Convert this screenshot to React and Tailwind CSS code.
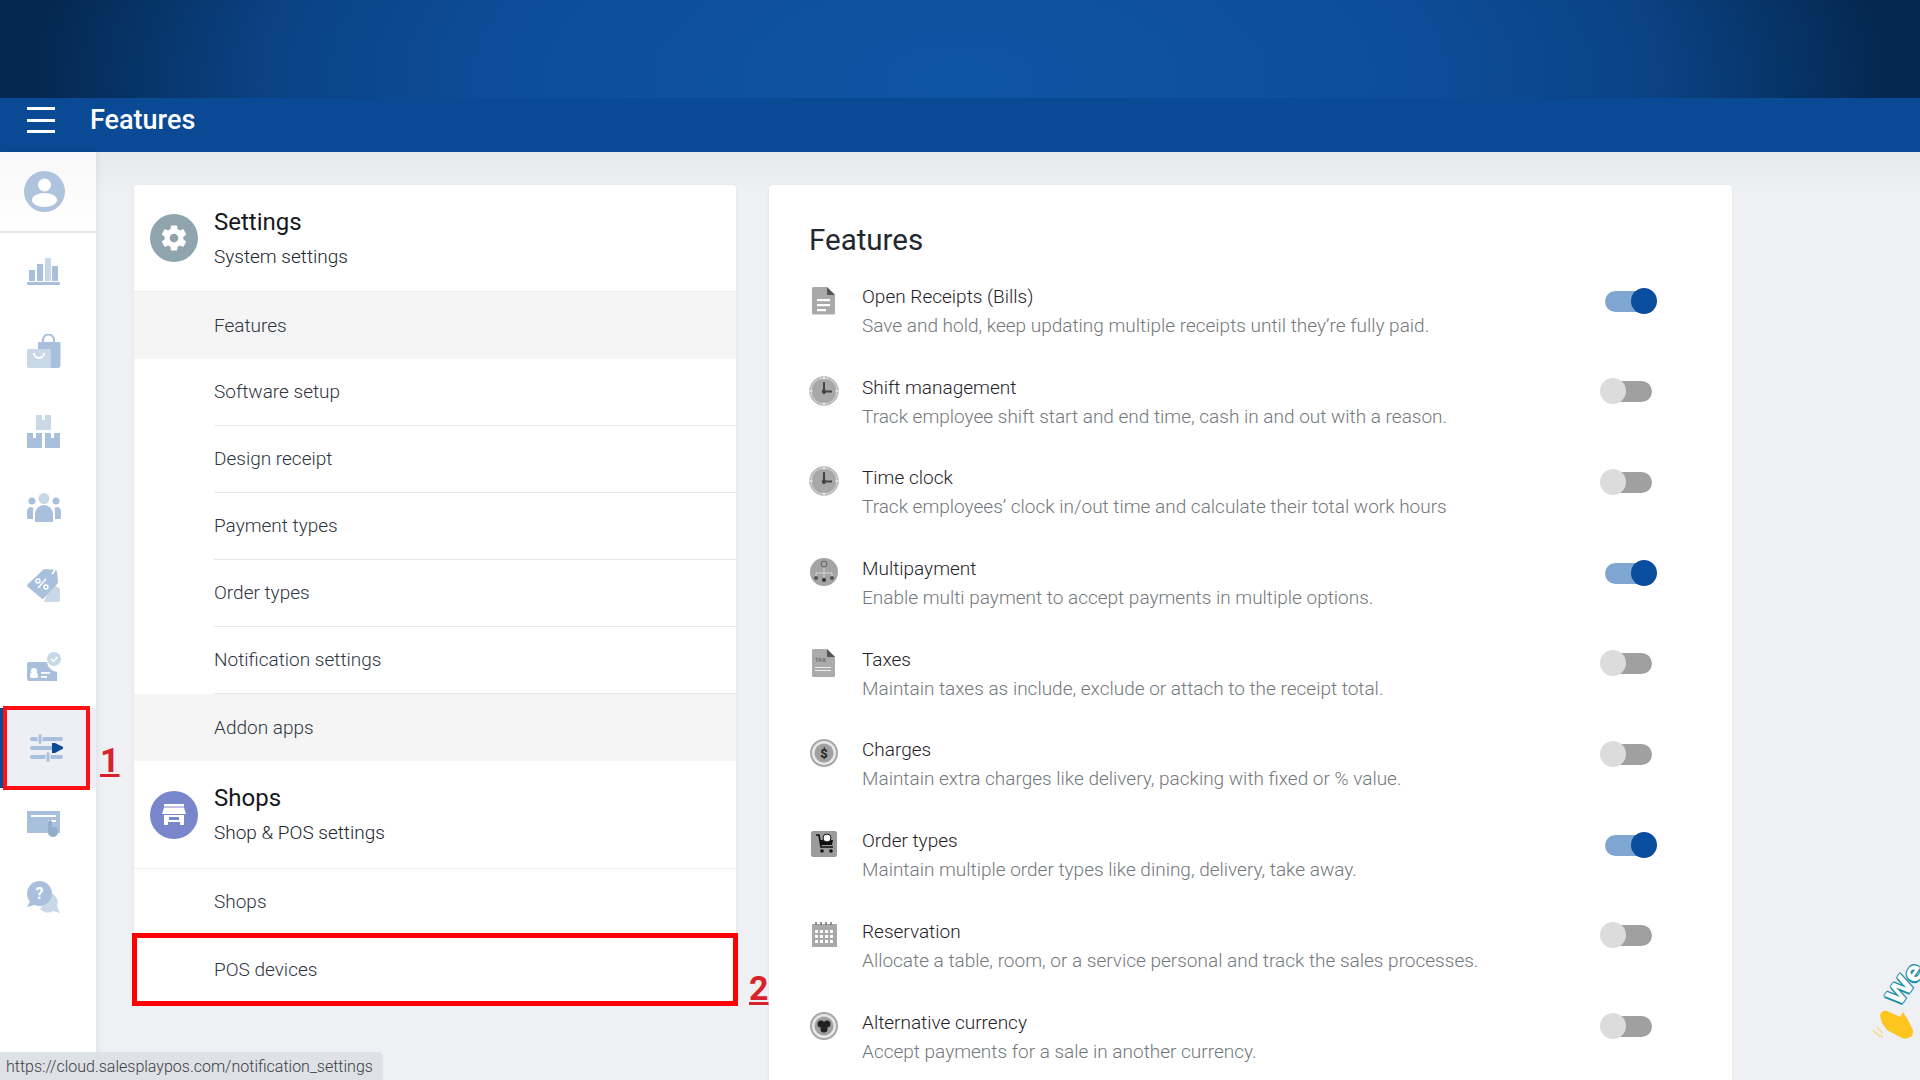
import React from "react";

const F = { fontFamily: 'Roboto, "Liberation Sans", sans-serif' };
const B = "#a9c0dc";
const L = "#c8d8e6";

const sideIcons = {
  chart: (
    <svg width="34" height="28" viewBox="0 0 34 28">
      <rect x="2" y="12" width="6" height="11" fill={B} />
      <rect x="10" y="6" width="6" height="17" fill={B} />
      <rect x="18" y="0" width="6" height="23" fill={L} />
      <rect x="25" y="8" width="6" height="15" fill={B} />
      <rect x="0" y="24" width="33" height="3" rx="1" fill={B} />
    </svg>
  ),
  bag: (
    <svg width="34" height="34" viewBox="0 0 34 34">
      <path d="M16 8V6a5 5 0 0 1 11 0v2" fill="none" stroke={B} strokeWidth="2" />
      <path d="M11 8h21a1.500 1.500 0 0 1 1.500 1.500V31a3 3 0 0 1-3 3h-8V15H11z" fill={B} />
      <rect x="0" y="15" width="24" height="19" rx="2" fill={L} />
      <path d="M7 19a5 5 0 0 0 10 0" fill="none" stroke="#fff" strokeWidth="1.800" />
    </svg>
  ),
  boxes: (
    <svg width="34" height="33" viewBox="0 0 34 33">
      <path d="M9 0h6v5h3V0h6v15H9z" fill={L} />
      <path d="M0 18h6v5h3v-5h6v15H0zM18 18h6v5h3v-5h6v15H18z" fill={B} />
    </svg>
  ),
  people: (
    <svg width="34" height="29" viewBox="0 0 34 29">
      <circle cx="17" cy="5.500" r="5.500" fill={L} />
      <circle cx="5" cy="8" r="3.500" fill={B} />
      <circle cx="29" cy="8" r="3.500" fill={B} />
      <path d="M8 29v-8a9 9 0 0 1 18 0v8z" fill={B} />
      <path d="M0 25v-7a4 4 0 0 1 6.500-3A12 12 0 0 0 6 19v7H1.500A1.500 1.500 0 0 1 0 25zM34 25v-7a4 4 0 0 0-6.500-3 12 12 0 0 1 .5 4v7h4.500a1.500 1.500 0 0 0 1.500-1.500z" fill={B} />
    </svg>
  ),
  tag: (
    <svg width="34" height="35" viewBox="0 0 34 35">
      <path d="M24 14l9 7v11a2 2 0 0 1-2 2H17z" fill={L} />
      <path d="M1 16L16 2a2 2 0 0 1 2-1l10 1a2 2 0 0 1 2 2l1 10a2 2 0 0 1-1 2L17 30a2 2 0 0 1-3 0L1 19a2 2 0 0 1 0-3z" fill={B} />
      <path d="M11 20l8-9" stroke="#fff" strokeWidth="1.500" />
      <circle cx="11" cy="13" r="2" fill="none" stroke="#fff" strokeWidth="1.500" />
      <circle cx="19" cy="19" r="2" fill="none" stroke="#fff" strokeWidth="1.500" />
      <path d="M25 6l3-4" stroke="#fff" strokeWidth="1.500" />
    </svg>
  ),
  idcard: (
    <svg width="34" height="30" viewBox="0 0 34 30">
      <path d="M2 9h18a11 11 0 0 0 10 10v9a2 2 0 0 1-2 0H2a2 2 0 0 1-2-2V11a2 2 0 0 1 2-2z" fill={B} transform="translate(0 1)" />
      <circle cx="7" cy="19" r="3" fill="#fff" />
      <rect x="3" y="21" width="8" height="5" rx="1.500" fill="#fff" />
      <rect x="14" y="20" width="9" height="1.800" fill="#fff" />
      <rect x="14" y="24" width="6" height="1.800" fill="#fff" />
      <circle cx="27" cy="7" r="7" fill={L} />
      <path d="M24 7l2.500 2.500L30.500 5" fill="none" stroke="#fff" strokeWidth="1.500" />
    </svg>
  ),
  sliders: (
    <svg width="34" height="28" viewBox="0 0 34 28">
      <rect x="0" y="3" width="33" height="4" rx="2" fill={B} />
      <rect x="0" y="12" width="33" height="4" rx="2" fill={B} />
      <rect x="0" y="21" width="33" height="4" rx="2" fill={B} />
      <rect x="8" y="0" width="4" height="10" rx="1.500" fill={B} stroke="#eeeef5" strokeWidth="1" />
      <rect x="16" y="18" width="4" height="10" rx="1.500" fill={B} stroke="#eeeef5" strokeWidth="1" />
      <path d="M22 9h3l8 4v1.500L25 19h-3z" fill="#0b4a96" />
    </svg>
  ),
  card: (
    <svg width="34" height="28" viewBox="0 0 34 28">
      <path d="M0 0h33v22h-5a6 6 0 0 0-8 0H0z" fill={B} />
      <rect x="4" y="4" width="25" height="2" fill="#fff" />
      <rect x="21" y="9" width="8" height="2" fill="#fff" />
      <path d="M21 11a2 2 0 0 1 4 0v5h2a5 5 0 1 1-6 5z" fill="#93aecb" />
    </svg>
  ),
  help: (
    <svg width="34" height="33" viewBox="0 0 34 33">
      <path d="M24 12a10 10 0 0 1 6 13l3 7-7-2a10 10 0 0 1-13-2z" fill={L} />
      <circle cx="12.500" cy="12.500" r="12.500" fill={B} />
      <path d="M3 20l-3 6 8-2z" fill={B} />
      <text x="12.500" y="18" textAnchor="middle" fontSize="16" fontWeight="700" fill="#fff" style={F}>?</text>
    </svg>
  ),
};

const sideItems = [
  ["chart", "h-[77px]"],
  ["bag", "h-[82px]"],
  ["boxes", "h-[78px]"],
  ["people", "h-[74px]"],
  ["tag", "h-[82px]"],
  ["idcard", "h-[82px]"],
  ["sliders", "h-[80px]"],
  ["card", "h-[74px]"],
  ["help", "h-[70px]"],
];

function Clock() {
  return (
    <svg width="30" height="30" viewBox="0 0 30 30">
      <circle cx="15" cy="15" r="14.500" fill="#a6a6a6" stroke="#c9c9c9" strokeWidth="1" />
      <circle cx="15" cy="15" r="13" fill="#a8a8a8" stroke="#e8e8e8" strokeWidth="0.800" />
      <path d="M15 6v12M15 15.500h8" fill="none" stroke="#444" strokeWidth="2" />
      <circle cx="15" cy="15.500" r="2.200" fill="#444" />
      <path d="M15 .5v3M15 26.500v3M.5 15h3M26.500 15h3" stroke="#eee" strokeWidth="1.500" />
    </svg>
  );
}

const featureIcons = {
  doc: (
    <svg width="24" height="29" viewBox="0 0 24 29">
      <path d="M1.500 1H15l8 8v18a1.500 1.500 0 0 1-1.500 1.500h-20A1.500 1.500 0 0 1 0 27V2.500A1.500 1.500 0 0 1 1.500 1z" fill="#a9a9a9" />
      <path d="M15 1l8 8h-8z" fill="#555" />
      <rect x="5" y="13" width="13" height="2.200" fill="#fff" />
      <rect x="5" y="18" width="13" height="2.200" fill="#fff" />
      <rect x="5" y="23" width="9" height="2.200" fill="#fff" />
    </svg>
  ),
  clock: <Clock />,
  multi: (
    <svg width="28" height="28" viewBox="0 0 28 28">
      <circle cx="14" cy="14" r="14" fill="#a4a4a4" />
      <circle cx="14" cy="6" r="3" fill="none" stroke="#555" strokeWidth="0.800" />
      <path d="M14 10v5M6 18v-3h16v3M14 15v4" fill="none" stroke="#ddd" strokeWidth="0.900" />
      <circle cx="6" cy="20" r="2" fill="#555" />
      <circle cx="14" cy="22" r="2" fill="#333" />
      <circle cx="22" cy="20" r="2" fill="#555" />
    </svg>
  ),
  tax: (
    <svg width="24" height="28" viewBox="0 0 24 28">
      <path d="M1.500 0H15l8 8v18.500a1.500 1.500 0 0 1-1.500 1.500h-20A1.500 1.500 0 0 1 0 26.500V1.500A1.500 1.500 0 0 1 1.500 0z" fill="#ababab" />
      <path d="M15 0l8 8h-8z" fill="#555" />
      <text x="3" y="13" fontSize="6" fill="#555" style={F}>TAX</text>
      <rect x="3" y="18" width="16" height="1" fill="#eee" />
      <rect x="3" y="21" width="16" height="1" fill="#eee" />
    </svg>
  ),
  charges: (
    <svg width="28" height="28" viewBox="0 0 28 28">
      <circle cx="14" cy="14" r="13" fill="#e8e8e8" stroke="#a8a8a8" strokeWidth="2" />
      <circle cx="14" cy="14" r="9.500" fill="#a0a0a0" />
      <text x="14" y="18.500" textAnchor="middle" fontSize="13" fontWeight="700" fill="#222" style={F}>$</text>
    </svg>
  ),
  order: (
    <svg width="26" height="26" viewBox="0 0 26 26">
      <rect width="26" height="26" rx="2" fill="#9b9b9b" />
      <path d="M5 4h3l2 12h12" fill="none" stroke="#111" strokeWidth="1.600" />
      <path d="M9 9h13l-1 5H10z" fill="#111" />
      <circle cx="16" cy="7" r="4" fill="#fff" stroke="#111" strokeWidth="1" />
      <circle cx="11" cy="20" r="1.800" fill="#111" />
      <circle cx="20" cy="20" r="1.800" fill="#111" />
    </svg>
  ),
  cal: (
    <svg width="25" height="25" viewBox="0 0 25 25">
      <rect y="2" width="25" height="23" fill="#a9a9a9" />
      <path d="M4 0v3M9 0v3M14 0v3M19 0v3" stroke="#555" strokeWidth="1.200" />
      {[8, 13, 18].map((y) =>
        [2, 7, 12, 17].map((x) => <rect key={x + "-" + y} x={x + 1} y={y} width="3" height="3" fill="#fff" />)
      )}
    </svg>
  ),
  alt: (
    <svg width="28" height="28" viewBox="0 0 28 28">
      <circle cx="14" cy="14" r="13" fill="#e8e8e8" stroke="#a8a8a8" strokeWidth="2" />
      <circle cx="14" cy="14" r="9.500" fill="#a0a0a0" />
      <circle cx="11" cy="12" r="3.500" fill="#222" />
      <circle cx="17" cy="12" r="3.500" fill="#222" />
      <circle cx="14" cy="17" r="3.500" fill="#222" />
    </svg>
  ),
};

const features = [
  ["doc", "Open Receipts (Bills)", "Save and hold, keep updating multiple receipts until they’re fully paid.", true],
  ["clock", "Shift management", "Track employee shift start and end time, cash in and out with a reason.", false],
  ["clock", "Time clock", "Track employees’ clock in/out time and calculate their total work hours", false],
  ["multi", "Multipayment", "Enable multi payment to accept payments in multiple options.", true],
  ["tax", "Taxes", "Maintain taxes as include, exclude or attach to the receipt total.", false],
  ["charges", "Charges", "Maintain extra charges like delivery, packing with fixed or % value.", false],
  ["order", "Order types", "Maintain multiple order types like dining, delivery, take away.", true],
  ["cal", "Reservation", "Allocate a table, room, or a service personal and track the sales processes.", false],
  ["alt", "Alternative currency", "Accept payments for a sale in another currency.", false],
];

function Toggle({ on }) {
  return on ? (
    <div className="relative w-[52px] h-[26px] ml-[5px]">
      <div className="absolute left-0 top-[3px] w-[46px] h-[21px] rounded-full bg-[#7fa6d1]" />
      <div className="absolute right-0 top-0 w-[26px] h-[26px] rounded-full bg-[#0a4c9e]" />
    </div>
  ) : (
    <div className="relative w-[52px] h-[26px] mr-[5px]">
      <div className="absolute right-0 top-[3px] w-[46px] h-[21px] rounded-full bg-[#a0a0a0]" />
      <div className="absolute left-0 top-0 w-[26px] h-[26px] rounded-full bg-[#dcdcdc]" />
    </div>
  );
}

function NavRow({ label, active, divider }) {
  return (
    <div className={`h-[67px] flex items-center pl-[80px] ${active ? "bg-[#f5f5f5]" : ""}`}>
      <div className={`h-full flex-1 flex items-center pt-[1px] text-[19px] font-light text-[#2f3542] ${divider ? "border-b border-[#e8e8e8]" : ""}`}>
        {label}
      </div>
    </div>
  );
}

function SectionHead({ color, icon, title, sub, h }) {
  return (
    <div className={`${h} flex items-center pl-[16px] border-b border-[#ececec]`}>
      <div className="w-[48px] h-[48px] rounded-full flex items-center justify-center shrink-0" style={{ background: color }}>
        {icon}
      </div>
      <div className="ml-[16px]">
        <div className="text-[24px] leading-[34px] text-[#16181d]">{title}</div>
        <div className="text-[19px] leading-[30px] mt-[3px] font-light text-[#22262e]">{sub}</div>
      </div>
    </div>
  );
}

export default function App() {
  return (
    <div className="relative w-[1920px] h-[1080px] overflow-hidden bg-[#eef0f4] flex flex-col" style={F}>
      <div className="h-[98px] bg-[radial-gradient(ellipse_930px_400px_at_50%_80%,#0f55a6_0%,#0d4d98_50%,#0a4284_75%,#04284f_100%)]" />
      <div className="h-[54px] bg-[#0a4a95] flex items-center pl-[27px] pb-[10px]">
        <div className="w-[28px] flex flex-col gap-[8.500px]">
          <div className="h-[3px] bg-white" />
          <div className="h-[3px] bg-white" />
          <div className="h-[3px] bg-white" />
        </div>
        <div className="ml-[35px] text-[27px] leading-[30px] font-medium text-white -mt-[1px]">Features</div>
      </div>
      <div className="flex-1 flex min-h-0 bg-[linear-gradient(#e6e8ec,#eef0f4_40px)]">
        <div className="w-[96px] bg-white shrink-0 flex flex-col shadow-[2px_0_6px_rgba(0,0,0,0.06)]">
          <div className="h-[81px] flex items-center justify-center border-b-2 border-[#e6e6e6] bg-gradient-to-b from-[#f8f8fa] to-white pr-[7px]">
            <svg width="41" height="41" viewBox="0 0 41 41">
              <circle cx="20.500" cy="20.500" r="20.500" fill="#aec3dc" />
              <circle cx="20.500" cy="14" r="6.500" fill="#fff" />
              <ellipse cx="20.500" cy="29" rx="12.500" ry="7" fill="#fff" />
            </svg>
          </div>
          {sideItems.map(([k, h]) => (
            <div
              key={k}
              className={`${h} flex items-center justify-center ${k === "sliders" ? "bg-[#eeeef5] border-l-[3px] border-[#0a4b97] pr-[5px]" : "pr-[9px]"}`}
            >
              {sideIcons[k]}
            </div>
          ))}
        </div>

        <div className="flex-1 flex items-start pl-[38px] pt-[33px] gap-[33px]">
          <div className="w-[602px] bg-white rounded-t-[4px] shadow-[0_1px_4px_rgba(0,0,0,0.06)] shrink-0">
            <SectionHead
              h="h-[107px]"
              color="#90a4ae"
              title="Settings"
              sub="System settings"
              icon={
                <svg width="30" height="30" viewBox="0 0 24 24" fill="#fff">
                  <path d="M19.430 12.980c.04-.32.07-.64.07-.98s-.03-.66-.07-.98l2.110-1.650c.19-.15.240-.42.120-.64l-2-3.460c-.12-.22-.39-.30-.61-.22l-2.490 1c-.52-.40-1.080-.73-1.690-.98l-.38-2.650A.488.488 0 0 0 14 2h-4c-.25 0-.46.180-.49.420l-.38 2.650c-.61.25-1.170.59-1.690.98l-2.490-1c-.23-.09-.49 0-.61.220l-2 3.460c-.13.220-.07.490.12.640l2.110 1.650c-.04.320-.07.650-.07.980s.03.660.07.980l-2.110 1.650c-.19.150-.24.420-.12.640l2 3.460c.12.220.39.300.61.220l2.490-1c.52.400 1.080.730 1.690.980l.38 2.650c.03.240.24.420.49.420h4c.25 0 .46-.180.49-.420l.38-2.650c.61-.25 1.170-.59 1.690-.98l2.490 1c.23.090.49 0 .61-.220l2-3.460c.12-.22.07-.49-.12-.64l-2.110-1.650zM12 15.500c-1.930 0-3.500-1.570-3.500-3.500s1.570-3.500 3.500-3.500 3.500 1.570 3.500 3.500-1.570 3.500-3.500 3.500z" />
                </svg>
              }
            />
            <NavRow label="Features" active />
            <NavRow label="Software setup" divider />
            <NavRow label="Design receipt" divider />
            <NavRow label="Payment types" divider />
            <NavRow label="Order types" divider />
            <NavRow label="Notification settings" divider />
            <NavRow label="Addon apps" active />
            <SectionHead
              h="h-[108px]"
              color="#7986cb"
              title="Shops"
              sub="Shop & POS settings"
              icon={
                <svg width="24" height="21" viewBox="0 0 24 21" fill="#fff">
                  <rect x="2" y="0" width="20" height="2.500" />
                  <path d="M2 3.500h20L24 10H0z" />
                  <path d="M2 11h20v10h-4v-3H6v3H2zM7 13v3h10v-3z" fillRule="evenodd" />
                </svg>
              }
            />
            <NavRow label="Shops" divider />
            <NavRow label="POS devices" />
          </div>

          <div className="w-[963px] h-[895px] bg-white rounded-t-[4px] shadow-[0_1px_4px_rgba(0,0,0,0.06)] shrink-0 pl-[40px] pr-[75px]">
            <div className="h-[97px] flex items-center pt-[13px] text-[29.500px] text-[#23272f]">Features</div>
            {features.map(([ic, t, d, on]) => (
              <div key={t} className="h-[90.700px] flex">
                <div className="w-[53px] h-[36px] flex items-center justify-start">
                  <div className="w-[30px] flex justify-center">{featureIcons[ic]}</div>
                </div>
                <div className="flex-1">
                  <div className="text-[19px] leading-[29px] font-light text-[#1f2229]">{t}</div>
                  <div className="text-[19px] leading-[29px] font-light text-[#74777c]">{d}</div>
                </div>
                <div className="w-[57px] h-[37px] flex items-center">
                  <Toggle on={on} />
                </div>
              </div>
            ))}
          </div>
        </div>
      </div>

      <div className="absolute left-[3px] top-[706px] w-[87px] h-[84px] border-[4px] border-[#fe0f14]" />
      <div className="absolute left-[132px] top-[933px] w-[606px] h-[73px] border-[5px] border-[#fe0000]" />
      <div className="absolute left-[100px] top-[740px] text-[34px] leading-[40px] font-bold text-[#d8232a] underline decoration-[#d8232a]">1</div>
      <div className="absolute left-[749px] top-[968px] text-[34px] leading-[40px] font-bold text-[#d8232a] underline decoration-[#d8232a]">2</div>

      <div className="absolute left-0 bottom-0 w-[383px] h-[28px] rounded-tr-[4px] bg-[#dee1e6] text-[16px] leading-[29px] pl-[6px] text-[#3c4043] font-light">
        https://cloud.salesplaypos.com/notification_settings
      </div>

      <div
        className="absolute left-[1892px] top-[987px] -rotate-[55deg] origin-[0_50%] text-[26px] leading-[30px] font-bold text-white [text-shadow:-2px_1px_0_#1f8fa8,1px_-1px_0_#1f8fa8,-1px_-1px_0_#1f8fa8,1px_1px_0_#1f8fa8]"
        style={{ fontFamily: '"DejaVu Sans", sans-serif' }}
      >
        We
      </div>
      <svg className="absolute left-[1870px] top-[1008px]" width="44" height="34" viewBox="0 0 44 34">
        <path d="M10 7c1-3 4-5 7-4l13 6 3-5 5 8 5 10c0 5-1 7-3 7-3 2-6 2-8 1l-15-8-5-7z" fill="#fec51f" />
        <path d="M3 22c2 3 5 5 10 7M7 19c1 2 3 4 6 6" stroke="#f4dc8a" strokeWidth="1.500" fill="none" />
      </svg>
    </div>
  );
}
